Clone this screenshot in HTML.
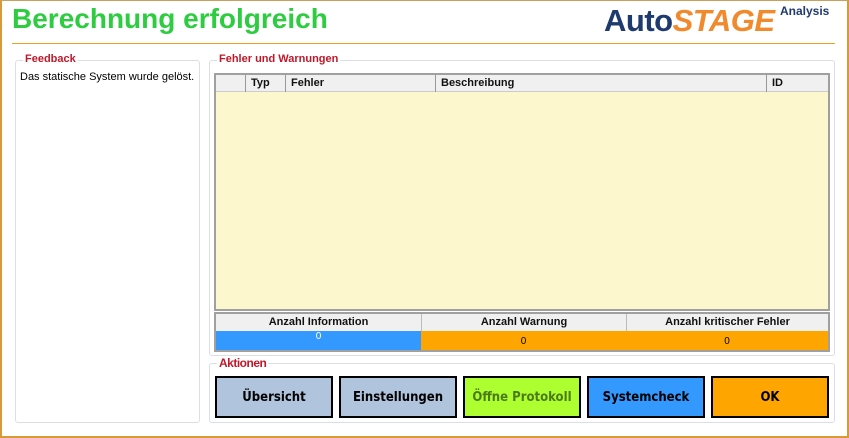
<!DOCTYPE html><html><head><style>
*{margin:0;padding:0;box-sizing:border-box}
body{width:849px;height:438px;background:#fff;position:relative;overflow:hidden;font-family:"Liberation Sans",sans-serif;font-size:11px}
.a{position:absolute}
.t{left:12px;top:3px;font:bold 28px "Liberation Sans",sans-serif;color:#2ecc40}
.g{border:1px solid #d8dfe6;border-radius:3px}
.lg{position:absolute;top:-8px;background:#fff;padding:0 2px;font:bold 11px "Liberation Sans",sans-serif;color:#c0182a}
.b{border:2px solid #000;font:bold 13px "Liberation Sans Narrow","DejaVu Sans Condensed",sans-serif;display:flex;align-items:center;justify-content:center;top:376px;width:118px;height:42px}
.h{background:#f0f0f0;font:bold 11px "Liberation Sans",sans-serif;color:#111}
</style></head><body>
<div class="a" style="left:0;top:0;width:849px;height:438px;border:2px solid #d69a3a;border-top:1px solid #c8a060"></div>
<div class="a t">Berechnung erfolgreich</div>
<div class="a" style="left:604px;top:3px;font:italic bold 31px 'Liberation Sans',sans-serif;letter-spacing:-0.5px"><span style="color:#1f3a6e;font-style:normal">Auto</span><span style="color:#f08a2c">STAGE</span></div>
<div class="a" style="left:780px;top:4px;font:bold 12px 'Liberation Sans',sans-serif;color:#1f3a6e">Analysis</div>
<div class="a" style="left:12px;top:43px;width:823px;height:1px;background:#f0a020"></div>
<div class="a g" style="left:15px;top:60px;width:185px;height:363px"><div class="lg" style="left:7px">Feedback</div><div style="position:absolute;left:4px;top:10px;font-size:11px">Das statische System wurde gelöst.</div></div>
<div class="a g" style="left:209px;top:60px;width:626px;height:296px"><div class="lg" style="left:7px">Fehler und Warnungen</div></div>
<div class="a" style="left:214px;top:73px;width:616px;height:238px;border:2px solid #a0a0a0;background:#fdf7cd">
<div class="h" style="position:relative;height:17px;border-bottom:1px solid #ccc">
<span class="a" style="left:29px;top:0;height:17px;border-left:1px solid #999"></span>
<span class="a" style="left:35px;top:2px">Typ</span>
<span class="a" style="left:69px;top:0;height:17px;border-left:1px solid #999"></span>
<span class="a" style="left:75px;top:2px">Fehler</span>
<span class="a" style="left:219px;top:0;height:17px;border-left:1px solid #999"></span>
<span class="a" style="left:225px;top:2px">Beschreibung</span>
<span class="a" style="left:550px;top:0;height:17px;border-left:1px solid #999"></span>
<span class="a" style="left:556px;top:2px">ID</span>
</div></div>
<div class="a" style="left:214px;top:312px;width:616px;height:40px;border:2px solid #a0a0a0;display:grid;grid-template-columns:205px 205px 202px;grid-template-rows:17px 19px;text-align:center">
<div class="h" style="padding-top:2px">Anzahl Information</div><div class="h" style="padding-top:2px;border-left:1px solid #bbb">Anzahl Warnung</div><div class="h" style="padding-top:2px;border-left:1px solid #bbb">Anzahl kritischer Fehler</div>
<div style="background:#3399ff;color:#fff;font-size:10px">0</div><div style="background:#ffa500;font-size:10px;padding-top:5px">0</div><div style="background:#ffa500;font-size:10px;padding-top:5px">0</div>
</div>
<div class="a g" style="left:209px;top:363px;width:626px;height:60px"><div class="lg" style="left:7px;font-size:12px;letter-spacing:-0.5px">Aktionen</div></div>
<div class="a b" style="left:215px;background:#b0c4de">Übersicht</div>
<div class="a b" style="left:339px;background:#b0c4de">Einstellungen</div>
<div class="a b" style="left:463px;background:#adff2f;color:#4c7a1a">Öffne Protokoll</div>
<div class="a b" style="left:587px;background:#3399ff">Systemcheck</div>
<div class="a b" style="left:711px;background:#ffa500">OK</div>
</body></html>
